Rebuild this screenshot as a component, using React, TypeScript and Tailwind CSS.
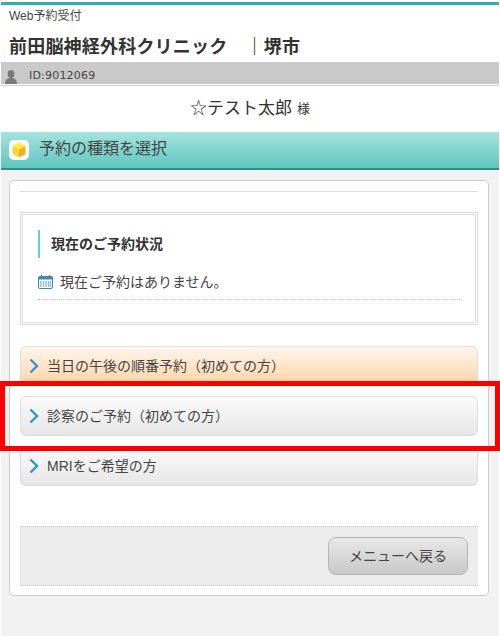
const MenuButton = ({ label, orange }: { label: string; orange?: boolean }) => (
  <a
    className={`flex items-center h-10 pl-[8px] rounded-md border border-[#dddddd] text-[14px] text-[#444444] ${
      orange ? "bg-gradient-to-b from-[#fff6ec] to-[#ffd3a6]" : "bg-gradient-to-b from-[#fbfbfb] to-[#e6e6e6]"
    }`}
  >
    <svg width="10" height="16" viewBox="0 0 10 16" className="mr-2 shrink-0">
      <path d="M1.5 1.5 L8 8 L1.5 14.5" fill="none" stroke="#2d95d3" strokeWidth="2.4" />
    </svg>
    {label}
  </a>
);

export default function App() {
  return (
    <div className="relative w-[500px] h-[636px] overflow-hidden bg-white px-px pt-[2px] font-['Liberation_Sans','Noto_Sans_CJK_JP',sans-serif] text-[#333333]">
      {/* header */}
      <div className="h-[3px] bg-[#2fb0aa]" />
      <div className="h-[19px] pl-2 pt-[2px] text-[12px] leading-[18px] text-[#444444]">Web予約受付</div>
      <div className="h-[38px] pl-2 text-[18px] leading-[46px] font-bold tracking-[0.2px] text-[#333333] whitespace-pre">前田脳神経外科クリニック　｜堺市</div>

      {/* id bar */}
      <div className="h-[22px] flex items-center bg-[#c9c9c9]">
        <svg width="12" height="14" viewBox="0 0 12 14" className="ml-[4px] mt-[7px]">
          <ellipse cx="6" cy="4" rx="3.4" ry="4" fill="#7a7a7a" />
          <path d="M0 14 C0 9.5 2.5 8.5 4.5 8 H7.5 C9.5 8.5 12 9.5 12 14 Z" fill="#7a7a7a" />
        </svg>
        <span className="ml-[12px] mt-[7px] text-[11px] tracking-[0.2px] font-['DejaVu_Sans',sans-serif] text-[#444444]">ID:9012069</span>
      </div>
      <div className="h-px mt-px bg-[#cfcfcf]" />

      {/* user name */}
      <div className="h-[46px] flex items-center justify-center text-[17px] text-[#333333]">
        ☆テスト太郎<span className="ml-[5px] text-[13px]">様</span>
      </div>

      {/* title bar */}
      <div className="h-[38px] flex items-center bg-gradient-to-b from-[#a3e4df] to-[#5fc4bf] border-b-2 border-[#2f8f8a]">
        <div className="ml-2 w-5 h-5 flex items-center justify-center rounded-[5px] bg-white">
          <svg width="14" height="16" viewBox="0 0 14 16">
            <path d="M7 0.5 L13.5 4 L7 7.5 L0.5 4 Z" fill="#ffe83f" />
            <path d="M0.5 4 L7 7.5 V15.5 L0.5 12 Z" fill="#ffd23a" />
            <path d="M13.5 4 L7 7.5 V15.5 L13.5 12 Z" fill="#efb021" />
          </svg>
        </div>
        <span className="ml-[10px] mb-[2px] text-[16px] text-[#444444]">予約の種類を選択</span>
      </div>

      {/* main */}
      <div className="bg-[#f2f2f2] h-[466px] pl-[8px] pr-[10px] pt-[10px]">
        <div className="h-[416px] bg-white border border-[#cccccc] rounded-[5px] px-[10px] pt-[10px]">
          <div className="h-px bg-[#dddddd]" />

          {/* current status */}
          <div className="mt-5 h-[113px] border border-[#dddddd] p-px">
            <div className="h-full border border-[#dddddd] px-[15px] pt-[15px]">
              <div className="h-7 pl-[11px] border-l-[2px] border-[#66cfc7] flex items-center text-[14px] font-bold text-[#333333]">
                現在のご予約状況
              </div>
              <div className="mt-[14px] h-[28px] flex items-start border-b border-dotted border-[#bbbbbb] text-[14px] leading-[20px] text-[#444444]">
                <svg width="15" height="14" viewBox="0 0 15 14" className="mt-[3px] mr-[7px] shrink-0">
                  <rect x="0.5" y="1.5" width="14" height="12" rx="1.5" fill="#ffffff" stroke="#3e86b8" />
                  <rect x="0.5" y="1.5" width="14" height="3" fill="#3e86b8" />
                  <path d="M3.5 0V3M11.5 0V3" stroke="#3e86b8" />
                  <path d="M3 6V12M5.5 6V12M8 6V12M10.5 6V12M12.5 6V12" stroke="#8fbcdc" strokeWidth="1.4" />
                </svg>
                現在ご予約はありません。
              </div>
            </div>
          </div>

          {/* menu */}
          <div className="mt-[21px] flex flex-col gap-[10px]">
            <MenuButton label="当日の午後の順番予約（初めての方）" orange />
            <MenuButton label="診察のご予約（初めての方）" />
            <MenuButton label="MRIをご希望の方" />
          </div>

          {/* footer */}
          <div className="mt-10 h-[60px] flex items-center justify-end pr-[10px] bg-[#ececec] border-y border-dotted border-[#cccccc]">
            <button className="w-[140px] h-[38px] rounded-lg border border-[#b5b5b5] bg-gradient-to-b from-[#e8e8e8] to-[#c8c8c8] text-[14px] text-[#444444]">
              メニューへ戻る
            </button>
          </div>
        </div>
      </div>

      {/* red highlight annotation */}
      <div className="absolute left-0 right-0 top-[381px] h-[70px] border-[5px] border-[#ff0000]" />
    </div>
  );
}
